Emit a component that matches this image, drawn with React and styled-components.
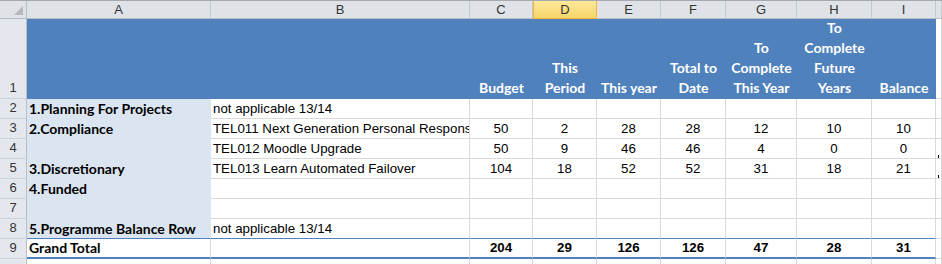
import React from "react";
import styled, { createGlobalStyle, css } from "styled-components";

const GlobalStyle = createGlobalStyle`
  html, body {
    margin: 0;
    padding: 0;
    background: #ffffff;
    overflow: hidden;
  }
`;

const COLUMNS = ["A", "B", "C", "D", "E", "F", "G", "H", "I", ""];
const ACTIVE_COLUMN = "D";

const TITLES = [
  "",
  "",
  ["Budget"],
  ["This", "Period"],
  ["This year"],
  ["Total to", "Date"],
  ["To", "Complete", "This Year"],
  ["To", "Complete", "Future", "Years"],
  ["Balance"],
];

const ROWS = [
  { n: 2, label: "1.Planning For Projects", item: "not applicable 13/14", values: [] },
  {
    n: 3,
    label: "2.Compliance",
    item: "TEL011 Next Generation Personal Response",
    values: [50, 2, 28, 28, 12, 10, 10],
  },
  {
    n: 4,
    label: "",
    item: "TEL012 Moodle Upgrade",
    values: [50, 9, 46, 46, 4, 0, 0],
    mark: true,
  },
  {
    n: 5,
    label: "3.Discretionary",
    item: "TEL013 Learn Automated Failover",
    values: [104, 18, 52, 52, 31, 18, 21],
    mark: true,
  },
  { n: 6, label: "4.Funded", item: "", values: [] },
  { n: 7, label: "", item: "", values: [] },
  { n: 8, label: "5.Programme Balance Row", item: "not applicable 13/14", values: [] },
];

const TOTAL = { n: 9, label: "Grand Total", values: [204, 29, 126, 126, 47, 28, 31] };

const Sheet = styled.div`
  display: grid;
  grid-template-columns: 27px 184px 259px 63px 64px 64px 65px 71px 75px 64px 6px;
  grid-template-rows: 18px 80px repeat(8, 20px) 6px;
  width: 942px;
  height: 264px;
  overflow: hidden;
  border-top: 1px solid #a5a9ae;
  box-sizing: border-box;
`;

const Corner = styled.div`
  position: relative;
  background: #dfe3e8;
  border-right: 1px solid #b9bec6;
  border-bottom: 1px solid #b9bec6;
  box-sizing: border-box;

  &::after {
    content: "";
    position: absolute;
    right: 3px;
    bottom: 3px;
    border-style: solid;
    border-width: 0 0 9px 9px;
    border-color: transparent transparent #b4b8bd transparent;
  }
`;

const ColHead = styled.div`
  display: flex;
  align-items: center;
  justify-content: center;
  background: #dfe3e8;
  border-right: 1px solid #c3c8cf;
  border-bottom: 1px solid #b9bec6;
  box-sizing: border-box;
  font-family: "Liberation Sans", Arial, sans-serif;
  font-size: 13px;
  color: #333333;

  ${(p) =>
    p.$active &&
    css`
      background: linear-gradient(#fde89a, #f9d56a);
      border: 1px solid #f2b53a;
      border-top: none;
    `}
`;

const RowHead = styled.div`
  display: flex;
  align-items: ${(p) => (p.$top ? "flex-start" : "flex-end")};
  justify-content: center;
  padding: ${(p) => (p.$top ? "1px 0 0" : "0 0 1px")};
  background: #e4e8ee;
  border-right: 1px solid #b9bec6;
  border-bottom: 1px solid #cdd2d9;
  box-sizing: border-box;
  font-family: "Liberation Sans", Arial, sans-serif;
  font-size: 13px;
  line-height: 18px;
  color: #333333;
  overflow: hidden;
`;

const Cell = styled.div`
  position: relative;
  display: flex;
  align-items: flex-end;
  min-width: 0;
  overflow: hidden;
  white-space: nowrap;
  box-sizing: border-box;
  background: #ffffff;
  border-right: 1px solid #d9d9d9;
  border-bottom: 1px solid #d9d9d9;
  font-family: "Liberation Sans", Arial, sans-serif;
  font-size: 13.3px;
  line-height: 19px;
  color: #000000;
  padding: 0 2px;
  justify-content: ${(p) => (p.$center ? "center" : "flex-start")};
  font-weight: ${(p) => (p.$bold ? 700 : 400)};

  ${(p) =>
    p.$label &&
    css`
      font-family: "Lato", "Liberation Sans", sans-serif;
      font-size: 14px;
      font-weight: 700;
    `}

  ${(p) =>
    p.$shade &&
    css`
      background: #dbe5f1;
      border-color: #dbe5f1;
    `}

  ${(p) =>
    p.$total &&
    css`
      border-top: 1px solid #4f81bd;
      border-bottom: 2px solid #4f81bd;
      margin-top: -1px;
    `}

  ${(p) =>
    p.$mark &&
    css`
      &::after {
        content: "";
        position: absolute;
        left: 2px;
        bottom: 0;
        width: 1px;
        height: 3px;
        background: #000000;
      }
    `}
`;

const TitleCell = styled.div`
  display: flex;
  flex-direction: column;
  justify-content: flex-end;
  align-items: center;
  padding-bottom: 1px;
  background: #4f81bd;
  box-sizing: border-box;
  font-family: "Lato", "Liberation Sans", sans-serif;
  font-size: 14px;
  font-weight: 700;
  line-height: 20px;
  color: #ffffff;
  white-space: nowrap;
  text-align: center;
`;

const App = () => {
  return (
    <>
      <GlobalStyle />
      <Sheet>
        <Corner />
        {COLUMNS.map((c, i) => (
          <ColHead key={`h${i}`} $active={c === ACTIVE_COLUMN}>
            {c}
          </ColHead>
        ))}

        <RowHead>1</RowHead>
        {TITLES.map((lines, i) => (
          <TitleCell key={`t${i}`}>
            {lines && lines.map((l) => <span key={l}>{l}</span>)}
          </TitleCell>
        ))}
        <Cell />

        {ROWS.map((r) => (
          <React.Fragment key={r.n}>
            <RowHead>{r.n}</RowHead>
            <Cell $label $shade>
              {r.label}
            </Cell>
            <Cell>{r.item}</Cell>
            {Array.from({ length: 7 }).map((_, i) => (
              <Cell key={i} $center>
                {r.values[i] ?? ""}
              </Cell>
            ))}
            <Cell $mark={r.mark} />
          </React.Fragment>
        ))}

        <RowHead>{TOTAL.n}</RowHead>
        <Cell $label $total>
          {TOTAL.label}
        </Cell>
        <Cell $total />
        {TOTAL.values.map((v, i) => (
          <Cell key={i} $center $bold $total>
            {v}
          </Cell>
        ))}
        <Cell />

        <RowHead $top>10</RowHead>
        {COLUMNS.map((c, i) => (
          <Cell key={`e${i}`} />
        ))}
      </Sheet>
    </>
  );
};

export default App;
